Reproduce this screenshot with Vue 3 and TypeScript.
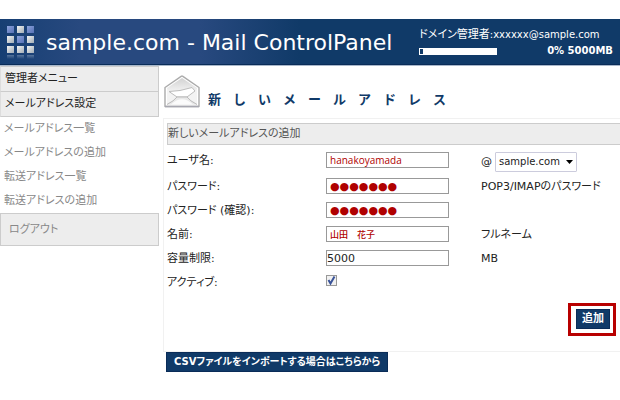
<script setup lang="ts">
import { ref } from 'vue'

const menuItems: string[] = [
  'メールアドレス一覧',
  'メールアドレスの追加',
  '転送アドレス一覧',
  '転送アドレスの追加',
]

const logoTones: string[] = [
  'blue', 'light', 'blue',
  'light', 'blue', 'light',
  'light', 'light', 'light',
]

const user = ref('hanakoyamada')
const domain = ref('sample.com')
const password = ref('●●●●●●●')
const confirmation = ref('●●●●●●●')
const fullName = ref('山田　花子')
const quota = ref('5000')
const active = ref(true)
</script>

<template>
  <div class="page">
    <header class="banner">
      <svg class="logo" viewBox="0 0 28 34" aria-hidden="true">
        <defs>
          <linearGradient id="tile-light" x1="0" y1="0" x2="1" y2="1">
            <stop offset="0" stop-color="#f2f4f4" />
            <stop offset="1" stop-color="#a3adb5" />
          </linearGradient>
          <linearGradient id="tile-blue" x1="0" y1="0" x2="1" y2="1">
            <stop offset="0" stop-color="#8ba3dc" />
            <stop offset="1" stop-color="#5671b5" />
          </linearGradient>
          <linearGradient id="tile-shadow" x1="0" y1="0" x2="0" y2="1">
            <stop offset="0" stop-color="#8199b8" stop-opacity="0.6" />
            <stop offset="1" stop-color="#8199b8" stop-opacity="0" />
          </linearGradient>
        </defs>
        <rect
          v-for="(tone, i) in logoTones"
          :key="i"
          :x="(i % 3) * 10"
          :y="Math.floor(i / 3) * 10"
          width="7"
          height="7"
          :fill="`url(#tile-${tone})`"
        />
        <rect v-for="n in 3" :key="`s${n}`" :x="(n - 1) * 10" y="29" width="7" height="4" fill="url(#tile-shadow)" />
      </svg>
      <div class="brand">sample.com - Mail ControlPanel</div>
      <div class="account">
        <div class="admin">ドメイン管理者<span class="small">:xxxxxx@sample.com</span></div>
        <div class="usage">
          <span class="meter"><span class="meter-used"></span></span>
          <span class="usage-text">0% 5000MB</span>
        </div>
      </div>
    </header>

    <div class="columns">
      <nav class="sidebar">
        <div class="menu-head">管理者メニュー</div>
        <div class="menu-head">メールアドレス設定</div>
        <ul class="menu">
          <li v-for="item in menuItems" :key="item"><a href="#">{{ item }}</a></li>
        </ul>
        <a class="logout" href="#">ログアウト</a>
      </nav>

      <main class="content">
        <div class="title">
          <svg class="envelope" viewBox="0 0 36 33" aria-hidden="true">
            <defs>
              <linearGradient id="paper" x1="0" y1="0" x2="0" y2="1">
                <stop offset="0" stop-color="#d2d2d2" />
                <stop offset="0.6" stop-color="#f8f8f8" />
                <stop offset="1" stop-color="#e8e8e8" />
              </linearGradient>
            </defs>
            <path d="M1 12.5 17.5 1.2Q18 .8 18.5 1.2L35 12.5V31.5H1Z" fill="#fff" stroke="#ababab" stroke-width="1.4" stroke-linejoin="round" />
            <path d="M3 13 18 3 33 13V29.5H3Z" fill="url(#paper)" />
            <path d="M3 14 13 22 3 29ZM33 14 23 22 33 29Z" fill="#f3f3f3" />
            <path d="M5 16.5 16 15.5 28 12.5 31 16 23 22H13Z" fill="#fff" stroke="#bcbcbc" stroke-width="1" />
            <path d="M3 29.5Q10 26 13 22H23Q26 26 33 29.5" fill="#e9e9e9" stroke="#bbb" stroke-width="1" />
            <path d="M7 29.5Q18 19 29 29.5Z" fill="#fbfbfb" />
            <path d="M1 31.5H35" stroke="#a7a7b0" stroke-width="1.5" />
          </svg>
          <h1>新しいメールアドレス</h1>
        </div>

        <form class="panel" @submit.prevent>
          <h2>新しいメールアドレスの追加</h2>
          <div class="fields">
            <div class="row row-user">
              <label for="user">ユーザ名:</label>
              <input id="user" v-model="user" class="box marked" type="text" />
              <div class="domain">
                <label for="domain">@</label>
                <span class="picker">
                  <select id="domain" v-model="domain"><option>sample.com</option></select>
                  <svg viewBox="0 0 7 4" aria-hidden="true"><path d="M0 0H7L3.5 4Z" /></svg>
                </span>
              </div>
            </div>
            <div class="row">
              <label for="password">パスワード:</label>
              <input id="password" v-model="password" class="box marked dots" type="text" />
              <span class="note">POP3/IMAPのパスワード</span>
            </div>
            <div class="row">
              <label for="confirmation">パスワード (確認):</label>
              <input id="confirmation" v-model="confirmation" class="box marked dots" type="text" />
            </div>
            <div class="row">
              <label for="name">名前:</label>
              <input id="name" v-model="fullName" class="box marked name" type="text" />
              <span class="note">フルネーム</span>
            </div>
            <div class="row">
              <label for="quota">容量制限:</label>
              <input id="quota" v-model="quota" class="box" type="text" />
              <span class="note">MB</span>
            </div>
            <div class="row">
              <label for="active">アクティブ:</label>
              <span class="check">
                <input id="active" v-model="active" type="checkbox" />
                <svg v-if="active" viewBox="0 0 11 11" aria-hidden="true"><path d="M2.5 5 4.5 8.5 8.5 1.5" /></svg>
              </span>
            </div>
          </div>
          <div class="actions">
            <div class="highlight"><button class="action" type="submit">追加</button></div>
          </div>
        </form>
        <button class="action import" type="button">CSVファイルをインポートする場合はこちらから</button>
      </main>
    </div>
  </div>
</template>

<style>
body {
  background: #fff;
}
</style>

<style scoped>
.page {
  padding-top: 19px;
  overflow: hidden;
  font-family: "DejaVu Sans", "Noto Sans CJK JP", sans-serif;
  font-size: 11px;
  line-height: 16px;
  color: #222;
  font-feature-settings: "palt";
}
.page * {
  box-sizing: border-box;
}
input,
select,
button {
  font: inherit;
  font-feature-settings: inherit;
  color: inherit;
  margin: 0;
}
.banner {
  display: flex;
  height: 47px;
  padding-left: 7px;
  color: #fff;
  background: linear-gradient(90deg, #163f73 0, #28497f 80px, #28497f 200px, #103a68 300px);
  border-bottom: 1px solid #a9b8cb;
  box-shadow: inset 0 -1px #0a2c58;
}
.logo {
  flex: none;
  width: 28px;
  height: 34px;
  margin-top: 7px;
}
.brand {
  flex: 1;
  padding: 8px 0 0 11px;
  font-size: 22px;
  line-height: 32px;
  white-space: nowrap;
}
.account {
  width: 201px;
  padding: 8px 7px 0 0;
  white-space: nowrap;
}
.small {
  font-size: 10px;
}
.usage {
  display: flex;
  justify-content: space-between;
  align-items: center;
}
.meter {
  width: 78px;
  height: 7px;
  background: #fff;
  border: 1px solid #fff;
}
.meter-used {
  display: block;
  width: 3px;
  height: 5px;
  background: #103a68;
}
.usage-text {
  font-size: 10px;
  font-weight: bold;
}
.columns {
  display: flex;
}
.sidebar {
  flex: none;
  width: 159px;
  margin-right: 4px;
}
.menu-head {
  height: 26px;
  padding: 4px 4px;
  background: #ededed;
  border: 1px solid #ccc;
  border-left-color: #ddd;
}
.menu-head + .menu-head {
  margin-top: -1px;
}
.menu {
  margin: 0;
  padding: 0;
  list-style: none;
}
.menu a {
  display: block;
  padding: 4px;
  color: #888;
  text-decoration: none;
}
.logout {
  display: block;
  height: 33px;
  padding: 8px 8px;
  color: #888;
  background: #ededed;
  border: 1px solid #ccc;
  text-decoration: none;
}
.content {
  flex: 1;
  min-width: 0;
}
.title {
  display: flex;
  height: 52px;
  padding: 9px 0 0 1px;
}
.envelope {
  width: 36px;
  height: 33px;
}
h1 {
  margin: 0;
  padding: 15px 0 0 8px;
  font-size: 13px;
  line-height: 20px;
  letter-spacing: 12px;
  font-feature-settings: normal;
  color: #103a68;
}
.panel {
  margin-right: -10px;
  border: 1px solid #f1f1f1;
  padding: 4px 0 0 3px;
}
h2 {
  height: 22px;
  margin: 0;
  padding: 2px 0;
  font-size: 11px;
  font-weight: normal;
  color: #555;
  background: #ededed;
  border: 1px solid #ccc;
}
.row {
  display: grid;
  grid-template-columns: 159px 123px 1fr;
  align-items: center;
  height: 24px;
}
.row > label,
.note {
  padding-top: 2px;
}
.note,
.domain {
  padding-left: 32px;
}
.row-user {
  height: 29px;
}
.box {
  width: 100%;
  height: 16px;
  padding: 0;
  line-height: 14px;
  background: #fff;
  border: 1px solid #999;
  border-radius: 0;
}
.marked {
  padding-left: 3px;
  font-family: "Open Sans", "DejaVu Sans", "Noto Sans CJK JP", sans-serif;
  font-size: 10px;
  color: #b00000;
}
.dots {
  font-family: "DejaVu Sans", sans-serif;
  font-size: 11px;
}
.name {
  font-family: "Noto Sans CJK JP", sans-serif;
  font-size: 9px;
  font-weight: 500;
}
.domain {
  display: flex;
  align-items: center;
  gap: 3px;
  padding-top: 4px;
}
.picker {
  display: grid;
  align-items: center;
  width: 82px;
}
.picker > * {
  grid-area: 1 / 1;
}
select {
  appearance: none;
  height: 20px;
  padding: 0 3px;
  font-size: 10px;
  background: #fff;
  border: 1px solid #ccd;
  border-radius: 1px;
}
.picker svg {
  width: 7px;
  height: 4px;
  margin-right: 4px;
  justify-self: end;
  pointer-events: none;
}
.check {
  display: grid;
  width: 11px;
  padding-bottom: 4px;
}
.check > * {
  grid-area: 1 / 1;
}
.check input {
  appearance: none;
  width: 11px;
  height: 11px;
  background: #f1f1f1;
  border: 1px solid #999;
}
.check svg {
  width: 11px;
  height: 11px;
  fill: none;
  stroke: #3a5499;
  stroke-width: 2;
  pointer-events: none;
}
.actions {
  display: flex;
  justify-content: flex-end;
  padding: 9px 13px 15px 0;
}
.highlight {
  padding: 3px 3px 4px 5px;
  border: 3px solid #b80000;
}
.action {
  display: block;
  height: 20px;
  padding: 0 5px;
  font-weight: bold;
  line-height: 18px;
  color: #fff;
  background: #103a68;
  border: 1px solid #0a2c58;
  white-space: nowrap;
}
.import {
  margin-left: 3px;
  padding: 0 7px;
  font-size: 10px;
}
</style>
